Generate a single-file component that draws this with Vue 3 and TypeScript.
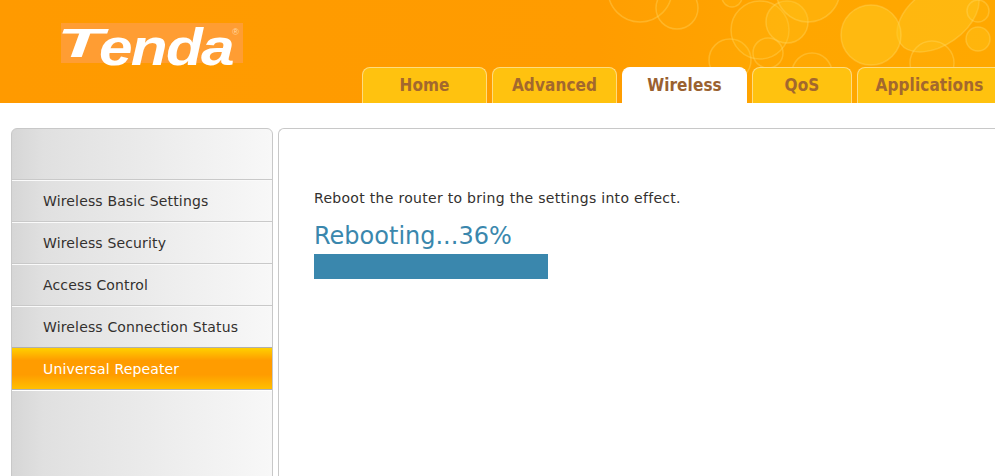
<script setup lang="ts">
const tabs = [
  { label: 'Home', width: 125 },
  { label: 'Advanced', width: 125 },
  { label: 'Wireless', width: 125, active: true },
  { label: 'QoS', width: 100 },
  { label: 'Applications', width: 145 },
]

const menu = [
  { label: 'Wireless Basic Settings' },
  { label: 'Wireless Security' },
  { label: 'Access Control' },
  { label: 'Wireless Connection Status' },
  { label: 'Universal Repeater', active: true },
]

const bubbles = [
  { cx: 640, cy: -10, r: 32, o: 0.06 },
  { cx: 677, cy: 8, r: 21, o: 0.12 },
  { cx: 732, cy: -3, r: 10, o: 0.18 },
  { cx: 730, cy: 60, r: 21, o: 0.08 },
  { cx: 760, cy: 30, r: 29, o: 0.18 },
  { cx: 768, cy: 53, r: 15, o: 0.06 },
  { cx: 787, cy: 22, r: 21, o: 0.3 },
  { cx: 808, cy: -10, r: 32, o: 0.3 },
  { cx: 812, cy: 73, r: 20, o: 0.06 },
  { cx: 871, cy: 35, r: 30, o: 0.55 },
  { cx: 932, cy: 63, r: 22, o: 0.12 },
  { cx: 978, cy: 11, r: 11, o: 0.2 },
  { cx: 978, cy: 39, r: 12, o: 0.4 },
]

const percent = 36
</script>

<template>
  <div class="page">
    <header class="top">
      <svg class="top__bubbles" width="995" height="103" viewBox="0 0 995 103" aria-hidden="true">
        <ellipse cx="938" cy="17" rx="46" ry="28" transform="rotate(-35 938 17)" class="bubble" fill-opacity="0.5" />
        <circle
          v-for="b in bubbles"
          :key="b.cx"
          :cx="b.cx"
          :cy="b.cy"
          :r="b.r"
          :fill-opacity="b.o"
          class="bubble"
        />
      </svg>
      <div class="logo">
        <span class="logo__t">T</span>
        <span class="logo__word">enda</span>
        <span class="logo__mark">®</span>
      </div>
      <nav class="tabs">
        <a
          v-for="tab in tabs"
          :key="tab.label"
          class="tab"
          :class="{ 'tab--active': tab.active }"
          :style="{ width: tab.width + 'px' }"
        >{{ tab.label }}</a>
      </nav>
    </header>

    <main class="body">
      <aside class="side">
        <ul class="side__menu">
          <li
            v-for="item in menu"
            :key="item.label"
            class="side__item"
            :class="{ 'side__item--active': item.active }"
          >{{ item.label }}</li>
        </ul>
      </aside>
      <section class="panel">
        <p class="panel__msg">Reboot the router to bring the settings into effect.</p>
        <h2 class="panel__state">Rebooting...{{ percent }}%</h2>
        <div class="progress">
          <div class="progress__bar" :style="{ width: percent + '%' }"></div>
        </div>
      </section>
    </main>
  </div>
</template>

<style scoped>
.page {
  height: 476px;
  overflow: hidden;
  background: #fff;
  font-family: "DejaVu Sans", sans-serif;
}

.top {
  position: relative;
  display: flex;
  align-items: flex-end;
  height: 103px;
  overflow: hidden;
  background: linear-gradient(90deg, #ff9a00 0%, #ff9c00 60%, #ffa600 80%, #ffa800 100%);
}

.top__bubbles {
  position: absolute;
  left: 0;
  top: 0;
}

.bubble {
  fill: #ffc81e;
  stroke: rgba(255, 222, 110, 0.35);
  stroke-width: 1.5;
}

.logo {
  position: absolute;
  left: 61px;
  top: 23px;
  width: 182px;
  height: 40px;
  background: #ff9d33;
  color: #fff;
  font-family: "Liberation Sans", sans-serif;
  font-weight: 700;
  font-style: italic;
}

.logo__t,
.logo__word {
  position: absolute;
  transform-origin: left bottom;
}

.logo__t {
  left: -4px;
  bottom: 2px;
  font-size: 40px;
  line-height: 40px;
  height: 38px;
  transform: scaleX(1.9);
}

.logo__word {
  left: 38px;
  bottom: 2px;
  font-size: 52px;
  line-height: 40px;
  height: 34px;
  letter-spacing: -1.5px;
  transform: scaleX(1.16);
}

.logo__mark {
  position: absolute;
  right: 4px;
  top: 4px;
  font-size: 9px;
  font-style: normal;
  font-weight: 400;
  line-height: 10px;
  color: #ffd9a8;
}

.tabs {
  position: relative;
  display: flex;
  gap: 5px;
  margin-left: 362px;
  flex-shrink: 0;
}

.tab {
  box-sizing: border-box;
  height: 36px;
  border: 1px solid #ffdb80;
  border-bottom: 0;
  border-radius: 8px 8px 0 0;
  background: #ffc20f;
  color: #a3682e;
  font-size: 17px;
  font-stretch: condensed;
  font-weight: 700;
  letter-spacing: 0.1px;
  line-height: 34px;
  text-align: center;
}

.tab--active {
  border-color: #fff;
  background: #fff;
  color: #9a6130;
}

.body {
  display: flex;
  gap: 5px;
  padding: 25px 0 0 11px;
}

.side {
  box-sizing: border-box;
  flex: 0 0 262px;
  height: 360px;
  padding-top: 50px;
  border: 1px solid #c8c8c8;
  border-radius: 6px 6px 0 0;
  background: linear-gradient(90deg, #d6d6d6 0%, #e0e0e0 12%, #f8f8f8 100%);
}

.side__menu {
  margin: 0;
  padding: 0;
  list-style: none;
}

.side__item {
  box-sizing: border-box;
  height: 42px;
  padding-left: 31px;
  border-top: 1px solid #c9c9c9;
  box-shadow: inset 0 1px 0 #fafafa;
  color: #33302e;
  font-size: 14px;
  letter-spacing: 0.15px;
  line-height: 42px;
}

.side__item--active {
  border-top-color: #b0b0b0;
  border-bottom: 1px solid #b0b0b0;
  height: 43px;
  box-shadow: 0 1px 0 #fff;
  background: linear-gradient(180deg, #ffd000 0%, #ff9c00 30%, #ff9c00 65%, #ffc000 100%);
  color: #fff;
}

.panel {
  box-sizing: border-box;
  flex: 1;
  height: 360px;
  padding: 59px 35px 0;
  border: 1px solid #c8c8c8;
  border-right: 0;
  border-radius: 6px 0 0 0;
  background: #fff;
}

.panel__msg {
  margin: 0;
  color: #33302e;
  font-size: 14px;
  letter-spacing: 0.3px;
  line-height: 20px;
}

.panel__state {
  margin: 11px 0 1px;
  color: #3a87ad;
  font-size: 24px;
  font-weight: 400;
  line-height: 34px;
}

.progress {
  width: 650px;
  height: 25px;
}

.progress__bar {
  height: 100%;
  background: #3a87ad;
}
</style>
